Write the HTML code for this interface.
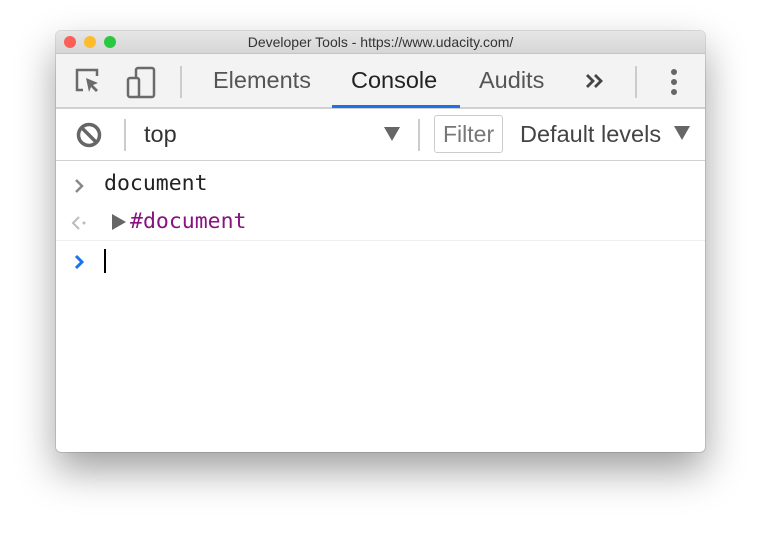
<!DOCTYPE html>
<html><head><style>
body{margin:0;width:761px;height:533px;background:#fff;position:relative;overflow:hidden;font-family:"Liberation Sans",sans-serif}
.win{position:absolute;left:56px;top:31px;width:649px;height:421px;border-radius:5px;overflow:hidden;background:#fff;box-shadow:0 18px 40px rgba(0,0,0,.38),0 0 0 1px rgba(0,0,0,.12)}
.a{position:absolute}
.title{left:0;top:0;width:649px;height:22px;background:linear-gradient(#e6e6e6,#d6d6d6);border-bottom:1px solid #c4c4c4;font-size:14px;color:#333;text-align:center;line-height:23px}
.dot{width:12px;height:12px;border-radius:50%;top:5px}
.tb{left:0;top:23px;width:649px;height:53px;background:#f3f3f3;border-bottom:2px solid #d0d0d0}
.tab{font-size:23.5px;color:#555;top:36px}
.mono{font-family:"DejaVu Sans Mono","Liberation Mono",monospace;font-size:21.5px}
</style></head><body>
<div class="win">
<div class="a title">Developer Tools - https://www.udacity.com/</div>
<div class="a dot" style="left:8px;background:#fc5f57"></div>
<div class="a dot" style="left:28px;background:#fdbc2e"></div>
<div class="a dot" style="left:48px;background:#29c840"></div>
<div class="a tb"></div>
<svg class="a" style="left:18px;top:36px" width="32" height="30" viewBox="0 0 32 30"><path d="M9 23H3V3h20v6" fill="none" stroke="#6a6a6a" stroke-width="2.5"/><path d="M12 11l12 5-5 2 5 5-2 2-5-5-2 5z" fill="#6a6a6a"/></svg>
<svg class="a" style="left:70px;top:35px" width="34" height="34" viewBox="0 0 34 34"><rect x="10" y="2" width="18" height="29" rx="2" fill="none" stroke="#6a6a6a" stroke-width="2.5"/><rect x="2" y="12" width="11" height="19" rx="2" fill="#f3f3f3" stroke="#6a6a6a" stroke-width="2.5"/></svg>
<div class="a" style="left:124px;top:35px;width:2px;height:32px;background:#ccc"></div>
<div class="a tab" style="left:157px">Elements</div>
<div class="a tab" style="left:295px;color:#222">Console</div>
<div class="a" style="left:276px;top:74px;width:128px;height:3px;background:#1a73e8"></div>
<div class="a tab" style="left:423px">Audits</div>
<svg class="a" style="left:529px;top:42px" width="20" height="16" viewBox="0 0 20 16"><path d="M2 2l6 6-6 6M10 2l6 6-6 6" fill="none" stroke="#444" stroke-width="2.8"/></svg>
<div class="a" style="left:579px;top:35px;width:2px;height:32px;background:#ccc"></div>
<div class="a" style="left:615px;top:38px;width:6px;height:6px;border-radius:50%;background:#666;box-shadow:0 10px 0 #666,0 20px 0 #666"></div>
<svg class="a" style="left:20px;top:91px" width="26" height="26" viewBox="0 0 26 26"><circle cx="13" cy="13" r="10.5" fill="none" stroke="#666" stroke-width="3.5"/><path d="M6 6l14 14" stroke="#666" stroke-width="3.5"/></svg>
<div class="a" style="left:68px;top:88px;width:2px;height:32px;background:#ccc"></div>
<div class="a" style="left:88px;top:90px;font-size:23.5px;color:#333">top</div>
<svg class="a" style="left:328px;top:96px" width="16" height="14"><path d="M0 0h16L8 14z" fill="#666"/></svg>
<div class="a" style="left:362px;top:88px;width:2px;height:32px;background:#ccc"></div>
<div class="a" style="left:378px;top:84px;width:69px;height:38px;border:1px solid #ccc;border-radius:3px;background:#fff;font-size:23px;color:#777;line-height:37px;padding-left:8px;box-sizing:border-box;overflow:hidden;white-space:nowrap">Filter</div>
<div class="a" style="left:464px;top:90px;font-size:23.5px;color:#444">Default levels</div>
<svg class="a" style="left:618px;top:95px" width="16" height="14"><path d="M0 0h16L8 14z" fill="#666"/></svg>
<div class="a" style="left:0;top:129px;width:649px;height:1px;background:#d0d0d0"></div>
<svg class="a" style="left:18px;top:147px" width="12" height="16"><path d="M2 2l6 6-6 6" fill="none" stroke="#888" stroke-width="2.5"/></svg>
<div class="a mono" style="left:48px;top:140px;color:#222">document</div>
<svg class="a" style="left:15px;top:184px" width="20" height="16"><path d="M8 2L2 8l6 6" fill="none" stroke="#bbb" stroke-width="2"/><circle cx="13" cy="8" r="1.5" fill="#bbb"/></svg>
<svg class="a" style="left:56px;top:183px" width="14" height="16"><path d="M0 0l14 8-14 8z" fill="#666"/></svg>
<div class="a mono" style="left:74px;top:178px;color:#881280">#document</div>
<div class="a" style="left:0;top:209px;width:649px;height:1px;background:#eee"></div>
<svg class="a" style="left:18px;top:223px" width="12" height="16"><path d="M2 2l6 6-6 6" fill="none" stroke="#1a73e8" stroke-width="3"/></svg>
<div class="a" style="left:48px;top:218px;width:2px;height:24px;background:#000"></div>
</div>
</body></html>
